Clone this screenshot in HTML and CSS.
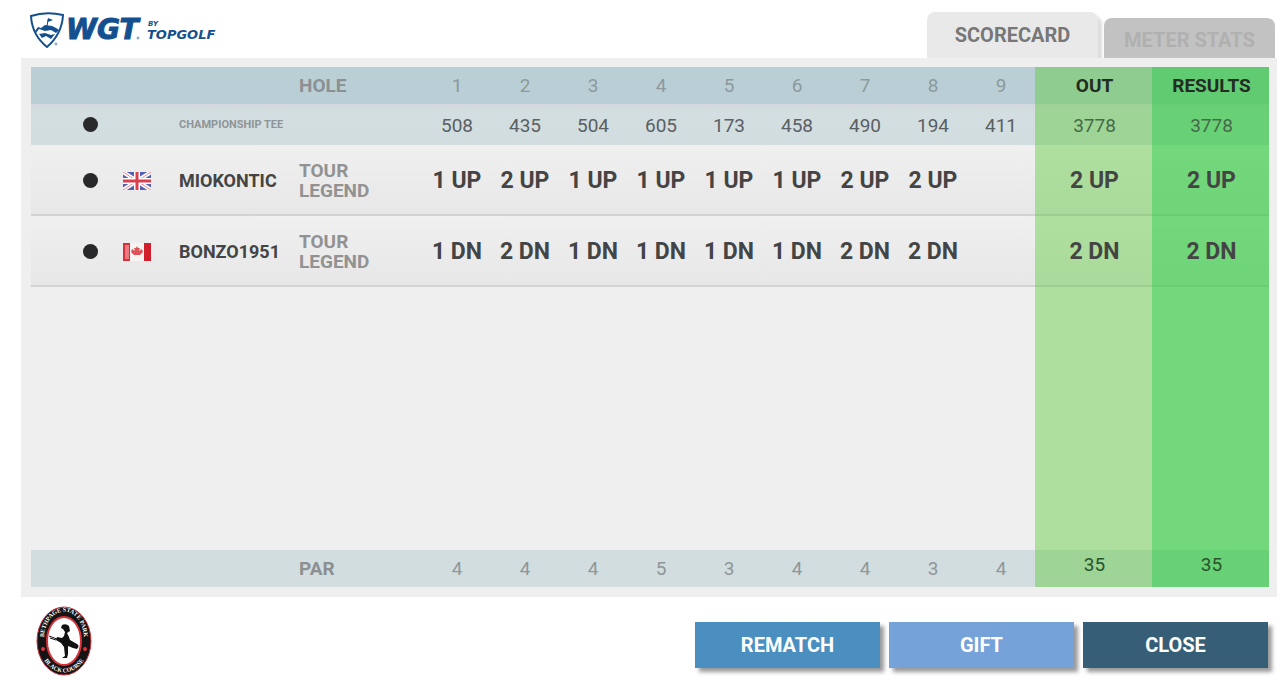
FILE: index.html
```html
<!DOCTYPE html>
<html lang="en">
<head>
    <meta charset="UTF-8">
    <meta name="viewport" content="width=device-width, initial-scale=1.0">
    <title>WGT Scorecard</title>
    <link rel="stylesheet" href="styles.css">
</head>
<body>
    <header class="header">
        <svg class="logo" width="200" height="44" viewBox="0 0 200 44" role="img" aria-label="WGT by Topgolf">
            <path class="shield" d="M3 6 Q18 1 35 5 Q34 24 19 37 Q4 25 3 6 Z"/>
            <path class="shield-land" d="M7 21 L10 17 L13 18 L17 15 L24 16 L28 18 L31 20 L28 23 L23 20 L17 21 L11 19 L8 23 Z M11 24 L17 23 L23 25 L27 24 L23 29 L18 26 L14 28 Z"/>
            <path class="flag-pole" d="M19 17 L20 9"/>
            <path class="shield-land" d="M20 8 L25 10 L20 12 Z"/>
            <circle class="reg" cx="28" cy="34" r="1"/>
            <text class="logo-wgt" x="38" y="29">WGT</text>
            <circle class="reg" cx="110" cy="28" r="1"/>
            <text class="logo-by" x="120" y="16">BY</text>
            <text class="logo-topgolf" x="119" y="29">TOPGOLF</text>
        </svg>
        <nav class="tabs">
            <button class="tab active" type="button">SCORECARD</button>
            <button class="tab" type="button">METER STATS</button>
        </nav>
    </header>

    <main class="panel">
        <table class="scorecard">
            <colgroup>
                <col class="col-dot">
                <col class="col-flag">
                <col class="col-name">
                <col class="col-rank">
                <col span="9">
                <col class="col-total" span="2">
            </colgroup>
            <thead>
                <tr class="hole-row">
                    <td></td>
                    <td></td>
                    <td></td>
                    <th class="label">HOLE</th>
                    <th>1</th>
                    <th>2</th>
                    <th>3</th>
                    <th>4</th>
                    <th>5</th>
                    <th>6</th>
                    <th>7</th>
                    <th>8</th>
                    <th>9</th>
                    <th class="out">OUT</th>
                    <th class="results">RESULTS</th>
                </tr>
                <tr class="tee-row">
                    <td class="dot-cell"><span class="dot"></span></td>
                    <td></td>
                    <th class="tee-name" colspan="2">CHAMPIONSHIP TEE</th>
                    <td>508</td>
                    <td>435</td>
                    <td>504</td>
                    <td>605</td>
                    <td>173</td>
                    <td>458</td>
                    <td>490</td>
                    <td>194</td>
                    <td>411</td>
                    <td class="out">3778</td>
                    <td class="results">3778</td>
                </tr>
            </thead>
            <tbody>
                <tr class="player-row">
                    <td class="dot-cell"><span class="dot"></span></td>
                    <td class="flag-cell">
                        <svg class="flag" width="28" height="18" viewBox="0 0 28 18" role="img" aria-label="United Kingdom">
                            <rect width="28" height="18" fill="#5461b0"/>
                            <path d="M0 0 L28 18 M28 0 L0 18" stroke="#fff" stroke-width="4"/>
                            <path d="M0 0 L28 18 M28 0 L0 18" stroke="#e58a96" stroke-width="1"/>
                            <path d="M14 0 V18 M0 9 H28" stroke="#fff" stroke-width="6"/>
                            <path d="M14 0 V18 M0 9 H28" stroke="#dc3f4c" stroke-width="3"/>
                        </svg>
                    </td>
                    <th class="player">MIOKONTIC</th>
                    <td class="rank">TOUR<br>LEGEND</td>
                    <td>1 UP</td>
                    <td>2 UP</td>
                    <td>1 UP</td>
                    <td>1 UP</td>
                    <td>1 UP</td>
                    <td>1 UP</td>
                    <td>2 UP</td>
                    <td>2 UP</td>
                    <td></td>
                    <td class="out">2 UP</td>
                    <td class="results">2 UP</td>
                </tr>
                <tr class="player-row">
                    <td class="dot-cell"><span class="dot"></span></td>
                    <td class="flag-cell">
                        <svg class="flag" width="28" height="18" viewBox="0 0 28 18" role="img" aria-label="Canada">
                            <rect width="28" height="18" fill="#f6f3f3"/>
                            <rect width="7" height="18" fill="#d9303a"/>
                            <rect x="21" width="7" height="18" fill="#d0202b"/>
                            <rect x="2" y="2" width="4" height="14" fill="#ec7a80"/>
                            <path d="M14 3 L15 5 L17 5 L16 8 L19 6 L20 9 L17 12 L14 12 L14 15 L14 12 L11 12 L8 9 L9 6 L12 8 L11 5 L13 5 Z" fill="#e0525a"/>
                        </svg>
                    </td>
                    <th class="player">BONZO1951</th>
                    <td class="rank">TOUR<br>LEGEND</td>
                    <td>1 DN</td>
                    <td>2 DN</td>
                    <td>1 DN</td>
                    <td>1 DN</td>
                    <td>1 DN</td>
                    <td>1 DN</td>
                    <td>2 DN</td>
                    <td>2 DN</td>
                    <td></td>
                    <td class="out">2 DN</td>
                    <td class="results">2 DN</td>
                </tr>
                <tr class="empty-row">
                    <td colspan="13"></td>
                    <td class="out"></td>
                    <td class="results"></td>
                </tr>
            </tbody>
            <tfoot>
                <tr class="par-row">
                    <td></td>
                    <td></td>
                    <td></td>
                    <th class="label">PAR</th>
                    <td>4</td>
                    <td>4</td>
                    <td>4</td>
                    <td>5</td>
                    <td>3</td>
                    <td>4</td>
                    <td>4</td>
                    <td>3</td>
                    <td>4</td>
                    <td class="out">35</td>
                    <td class="results">35</td>
                </tr>
            </tfoot>
        </table>
    </main>

    <footer class="footer">
        <svg class="course" width="56" height="70" viewBox="0 0 56 70" role="img" aria-label="Bethpage State Park Black Course">
            <defs>
                <path id="arc-top" d="M9 41 A20 27 0 1 1 47 41"/>
                <path id="arc-bottom" d="M4 44 A25 31 0 0 0 52 44"/>
            </defs>
            <ellipse cx="28" cy="35" rx="27" ry="34" fill="#151313" stroke="#c8323a" stroke-width="1"/>
            <ellipse cx="28" cy="35" rx="17" ry="24" fill="#fff" stroke="#d8323a" stroke-width="2"/>
            <text class="course-text"><textPath href="#arc-top" startOffset="50%">BETHPAGE STATE PARK</textPath></text>
            <text class="course-text"><textPath href="#arc-bottom" startOffset="50%">BLACK COURSE</textPath></text>
            <circle cx="7" cy="43" r="2" fill="#e5323c"/>
            <circle cx="49" cy="43" r="2" fill="#e5323c"/>
            <!-- caddie carrying the bag -->
            <path d="M25 22 L26 19 Q30 17 33 20 L34 25 L31 27 L33 31 L34 34 L41 38 Q44 40 41 43 L37 42 L32 40 L32 48 L31 52 L26 52 L29 50 L28 41 L25 37 L20 34 L21 31 L26 32 L28 30 L29 26 L27 23 Z" fill="#111"/>
            <path d="M13 30 L21 33 M14 32 L20 34" stroke="#111" stroke-width="1"/>
        </svg>
        <div class="actions">
            <button class="rematch" type="button">REMATCH</button>
            <button class="gift" type="button">GIFT</button>
            <button class="close" type="button">CLOSE</button>
        </div>
    </footer>
</body>
</html>
```
FILE: styles.css
```css
* {
    box-sizing: border-box;
}

body {
    margin: 0;
    background: #fff;
    color: #444;
    font-family: Roboto, sans-serif;
}

button {
    border: none;
    font-family: inherit;
    font-weight: bold;
    cursor: pointer;
}

.header {
    display: flex;
    justify-content: space-between;
    align-items: flex-end;
    height: 58px;
    padding: 0 5px 0 28px;
}

.logo {
    margin-bottom: 4px;
    fill: #14508f;
}

.shield {
    fill: #fff;
    stroke: #14508f;
    stroke-width: 2;
}

.flag-pole {
    stroke: #14508f;
    stroke-width: 1;
}

.reg {
    fill: none;
    stroke: #6d8fb5;
    stroke-width: 1;
}

.logo text {
    font-family: "DejaVu Sans", sans-serif;
    font-style: italic;
    font-weight: bold;
}

.logo-wgt {
    font-size: 28px;
    stroke: #14508f;
    stroke-width: 1;
}

.logo-by {
    font-size: 7px;
}

.logo-topgolf {
    font-size: 13px;
}

.tabs {
    display: flex;
    align-items: flex-end;
    gap: 6px;
}

.tab {
    width: 171px;
    height: 40px;
    padding: 4px 0 0;
    border-radius: 8px 8px 0 0;
    background: #c2c2c2;
    color: #b0b0b0;
    font-size: 20px;
}

.tab.active {
    height: 46px;
    padding: 0;
    background: #e9e9e9;
    color: #777;
    box-shadow: 4px 4px 3px #ddd;
}

.panel {
    position: relative;
    margin: 0 3px 0 21px;
    padding: 9px 8px 10px 10px;
    background: #efefef;
}

.scorecard {
    width: 100%;
    table-layout: fixed;
    border-collapse: collapse;
}

.scorecard th,
.scorecard td {
    padding: 0;
    text-align: center;
}

.col-dot {
    width: 92px;
}

.col-flag {
    width: 56px;
}

.col-name {
    width: 120px;
}

.col-rank {
    width: 124px;
}

.col-total {
    width: 117px;
}

.scorecard .out {
    background: rgba(79, 199, 41, 0.4);
}

.scorecard .results {
    background: rgba(48, 202, 60, 0.65);
}

.scorecard tr .out,
.scorecard tr .results {
    padding-left: 2px;
}

.hole-row {
    height: 37px;
    background: #b9cfd5;
}

.hole-row th {
    color: #8d999c;
    font-size: 19px;
    font-weight: normal;
}

.hole-row .out,
.hole-row .results {
    color: #222c22;
    font-weight: bold;
}

.scorecard .label {
    color: #8c9092;
    font-size: 19px;
    font-weight: bold;
    text-align: left;
}

.tee-row {
    height: 41px;
    background: linear-gradient(#d3d8de, #d2dee0 20%, #d2dde0);
    font-size: 19px;
}

.tee-row td {
    padding-top: 2px;
    color: #5a6063;
}

.tee-row .out,
.tee-row .results {
    color: #456a48;
}

.scorecard .tee-name {
    color: #8f9496;
    font-size: 11px;
    text-align: left;
}

.scorecard .dot-cell {
    padding: 0 0 0 52px;
    text-align: left;
}

.dot {
    display: block;
    width: 15px;
    height: 15px;
    border-radius: 50%;
    background: #29292b;
}

.player-row {
    height: 71px;
    background: linear-gradient(#f0f0f0, #e7e7e8 69px, #d3d3d4 69px);
    font-size: 23px;
    font-weight: bold;
}

.flag {
    display: block;
}

.scorecard .player {
    font-size: 18px;
    text-align: left;
}

.scorecard .rank {
    color: #929292;
    font-size: 19px;
    line-height: 20px;
    text-align: left;
}

.empty-row {
    height: 263px;
}

.par-row {
    height: 37px;
    background: #d2dde0;
    color: #8f9699;
    font-size: 19px;
}

.par-row .out,
.par-row .results {
    padding-bottom: 8px;
    color: #29552c;
}

.footer {
    display: flex;
    justify-content: space-between;
    align-items: center;
    padding: 9px 12px 0 36px;
}

.actions {
    display: flex;
    gap: 9px;
    margin-top: 8px;
}

.actions button {
    width: 185px;
    height: 46px;
    color: #fff;
    font-size: 20px;
    box-shadow: 4px 4px 4px rgba(0, 0, 0, 0.4);
}

.actions .rematch {
    background: #4a8fbf;
}

.actions .gift {
    background: #75a2d8;
}

.actions .close {
    background: #365e77;
}

.course-text {
    fill: #fff;
    font-family: "Liberation Serif", serif;
    font-size: 6px;
    font-weight: bold;
    text-anchor: middle;
}
```
